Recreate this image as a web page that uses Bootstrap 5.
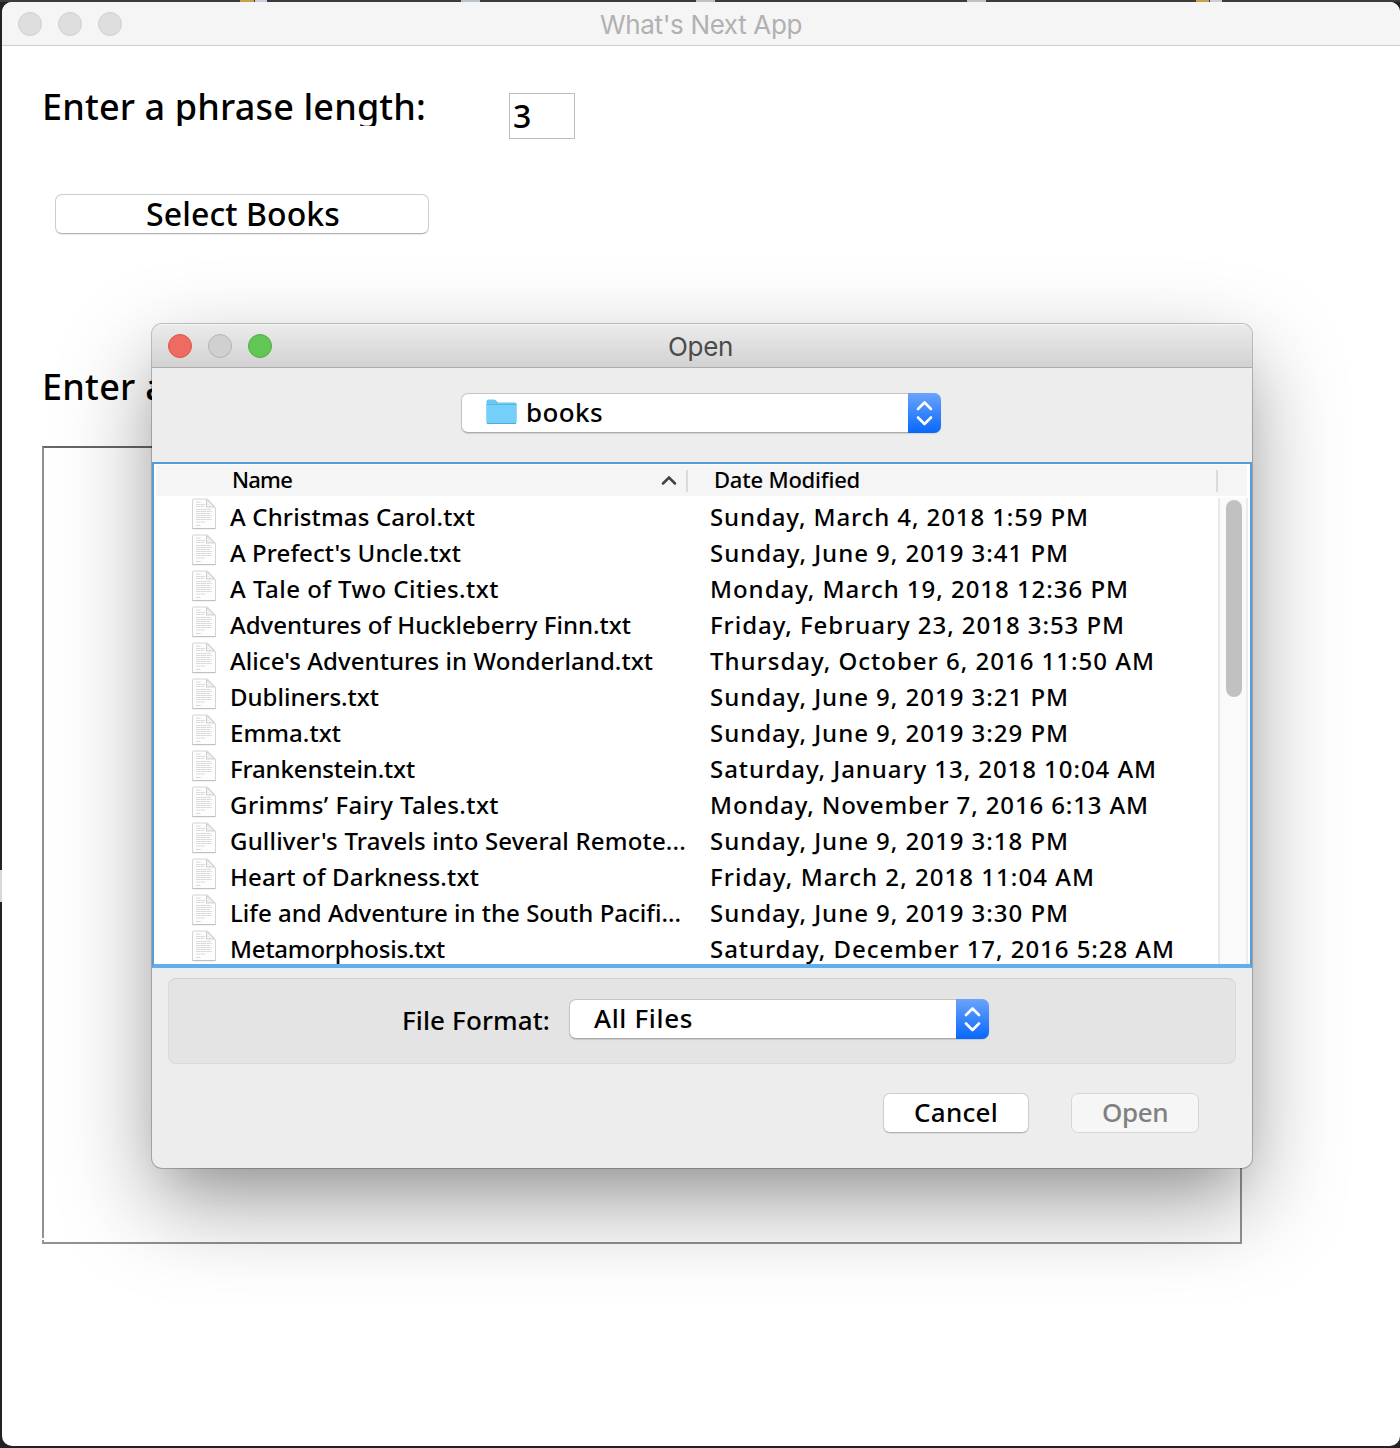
<!DOCTYPE html>
<html lang="en">
<head>
<meta charset="utf-8">
<title>What's Next App</title>
<link href="https://cdn.jsdelivr.net/npm/bootstrap@5.3.0/dist/css/bootstrap.min.css" rel="stylesheet">
<style>
body{background:#222224;font-family:"Noto Sans","Open Sans",sans-serif;color:#000;font-weight:500;width:1400px;height:1448px;overflow:hidden}
.desktop{width:1400px;height:1448px;padding:2px 0 2px 2px;background:
 linear-gradient(#c9a04a,#c9a04a) 240px 0/14px 2px no-repeat,linear-gradient(#ccd,#ccd) 255px 0/12px 2px no-repeat,
 linear-gradient(#b9c2c8,#b9c2c8) 461px 0/19px 2px no-repeat,linear-gradient(#b9c2c8,#b9c2c8) 696px 0/19px 2px no-repeat,
 linear-gradient(#b9c2c8,#b9c2c8) 967px 0/19px 2px no-repeat,linear-gradient(#c9a04a,#c9a04a) 1196px 0/13px 2px no-repeat,
 linear-gradient(#ccd,#ccd) 1210px 0/12px 2px no-repeat,linear-gradient(#d8d8d8,#d8d8d8) 0 870px/2px 32px no-repeat,
 linear-gradient(#3b3b3b,#3b3b3b) 0 0/1400px 2px no-repeat,#222224}
.appwin{background:#fff;border-radius:10px;height:1444px}
.appbar{height:44px;background:#f5f5f5;border-bottom:1px solid #d0d0d0;border-radius:10px 10px 0 0;padding-left:16px}
.lights{gap:16px}
.dot{width:24px;height:24px;border-radius:50%;border:1px solid #cfcfcf;background:#dedede;flex:none}
.wtitle{font-family:Inter,"Liberation Sans",sans-serif;font-weight:400;font-size:26px;line-height:32px;padding-top:2px}
.appbar .wtitle{color:#b1b1b1;margin-left:478px}
.appbody{padding:40px 0 0 40px}
.biglabel{font-size:36px;line-height:42px;height:40px;overflow:hidden}
.fit{display:inline-block;white-space:pre}
.field,.field:focus{width:66px;height:46px;border:1px solid #bcbcbc;border-radius:0;padding:0 0 2px 3px;font-size:32px;font-weight:500;color:#000;line-height:42px;margin:7px 0 0 83px}
.macbtn{background:#fff;border:1px solid #cdcdcd;border-bottom-color:#b2b2b2;border-radius:7px;padding:0;height:40px;line-height:34px;color:#000;font-weight:500;font-size:26px;box-shadow:0 1px 1px rgba(0,0,0,.08)}
.macbtn .fit{position:relative;top:-1px}
.macbtn:disabled{opacity:1;background:#f6f6f6;color:#808080;border-color:#d6d6d6;box-shadow:none}
.selbooks{width:374px;font-size:32px;line-height:39px;margin:55px 0 0 13px;padding-left:2px;display:block}
.label2{margin-top:132px}
.textbox{position:relative;width:1200px;height:798px;border:2px solid #929292;border-top-color:#666;margin-top:40px}
.textbox::after{content:"";position:absolute;left:-2px;bottom:2px;width:2px;height:2px;background:#fff}
.dialogwin{position:absolute;left:152px;top:324px;width:1100px;height:844px;border-radius:10px;background:#ededed;box-shadow:0 0 0 1px rgba(0,0,0,.22),0 36px 92px rgba(0,0,0,.36),0 26px 44px -20px rgba(0,0,0,.14);overflow:hidden}
.dlgbar{height:44px;background:linear-gradient(#ebebeb,#d2d2d2);border-top:1px solid #f4f4f4;border-bottom:1px solid #adadad;padding-left:16px}
.dlgbar .wtitle{color:#4b4b4b;margin-left:396px}
.red{background:#ed6b60;border-color:#dc544b}.green{background:#62c655;border-color:#50ac43}.gray{background:#d0d0d0;border-color:#b3b3b3}
.combo{height:40px;background:#fff;border:1px solid #c4c4c4;border-bottom-color:#aaa;border-radius:7px;box-shadow:0 1px 1px rgba(0,0,0,.12);font-size:26px;line-height:36px}
.stepper{width:33px;height:40px;margin:-1px -1px -1px auto;border-radius:0 7px 7px 0;background:linear-gradient(#6aa4fb,#0768fc)}
.places{width:480px;margin:25px 0 0 309px;padding-left:24px}
.folder{margin:5px 9px 0 0;flex:none}
.filelist{margin-top:29px;height:506px;border:2px solid #559cd8;border-bottom:4px solid #62adee;background:#fff;overflow:hidden}
.listhead{height:31px;margin:1px 3px 0 2px;background:#f5f5f5;font-size:22px;line-height:29px}
.listhead .fit{padding-bottom:2px}
.headname{width:530px;padding-left:76px}
.sortmark{margin-right:9px}
.sep{width:2px;height:22px;background:#dadada;flex:none}
.filerows{padding-top:2px}
.filerow{height:36px;line-height:38px;font-size:24px;padding-left:37px}
.doc{width:26px;height:32px;flex:none}
.fname{width:493px;padding-left:13px;flex:none}
.track{width:30px;height:468px;border-left:2px solid #e8e8e8;border-right:2px solid #ececec;background:#fafafa;margin:2px 2px 0 0;flex:none}
.thumb{width:16px;height:197px;border-radius:8px;background:#c1c1c1;margin:2px 0 0 6px}
.fmtpanel{margin:10px 16px 0;height:86px;border:1px solid #dadada;border-top-color:#d0d0d0;border-radius:8px;background:#e4e4e4;padding:20px 0 0 233px;font-size:26px}
.fmtlabel{line-height:42px}
.fmtcombo{width:420px;margin-left:19px;padding-left:24px}
.actions{gap:42px;padding:29px 53px 0 0}
</style>
<script src="https://cdn.jsdelivr.net/npm/bootstrap@5.3.0/dist/js/bootstrap.bundle.min.js"></script>
</head>
<body>
<svg width="0" height="0" class="d-none">
<symbol id="doc" viewBox="0 0 26 32"><path d="M1.500 2q0-1 1-1h14l8 8.500v21h-23z" fill="#fdfdfd" stroke="#d4d4d4"/><path d="M1.500 30.700h23" stroke="#bdbdbd"/><path d="M15.500 1.500v7.500h8.500z" fill="#f1f1f1" stroke="#c9c9c9" stroke-width=".9"/><path d="M5 4h5M5 6.500h9M5 8.500h8M5 11.500h15M5 13.500h16M5 15.500h14M5 17.500h16M5 19.500h15M5 21.500h16M5 24h9M5 27.500h5" stroke="#dadada" stroke-dasharray="4 .4 6 .3"/></symbol>
<symbol id="step" viewBox="0 0 33 40"><path d="M10 16l6.500-6.500L23 16M10 24.500l6.500 6.500 6.500-6.500" fill="none" stroke="#fff" stroke-width="2.600" stroke-linecap="round" stroke-linejoin="round"/></symbol>
</svg>
<div class="desktop">
<main class="appwin">
 <header class="appbar d-flex align-items-center"><div class="lights d-flex"><i class="dot"></i><i class="dot"></i><i class="dot"></i></div><span class="wtitle"><span class="fit" data-w="202">What's Next App</span></span></header>
 <section class="appbody">
  <div class="d-flex"><div class="biglabel"><span class="fit" data-w="384">Enter a phrase length:</span></div><input class="form-control field" value="3"></div>
  <button class="btn macbtn selbooks"><span class="fit" data-w="194">Select Books</span></button>
  <div class="biglabel label2"><span class="fit" data-w="124">Enter a</span></div>
  <div class="textbox"></div>
 </section>
</main>
</div>
<div class="dialogwin" role="dialog">
 <header class="dlgbar d-flex align-items-center"><div class="lights d-flex"><i class="dot red"></i><i class="dot gray"></i><i class="dot green"></i></div><span class="wtitle"><span class="fit" data-w="65">Open</span></span></header>
 <div class="combo places d-flex">
  <svg class="folder" width="31" height="26" viewBox="0 0 31 26"><path d="M.5 23V2.500Q.5.5 2.500.5H8q1.500 0 2.500 1.500l1.500 1.500h17q1.500 0 1.500 1.500v18q0 1.500-1.500 1.500H2Q.5 24.500.5 23z" fill="#69c7f4"/><path d="M.5 5.500h30V23q0 1.500-1.500 1.500H2Q.5 24.500.5 23z" fill="#74d0fa"/><path d="M.5 5.500h30" stroke="#5bb7e2"/><path d="M1 24.500h29" stroke="#55a9d0"/></svg>
  <span class="fit" data-w="77">books</span><svg class="stepper"><use href="#step"/></svg></div>
 <div class="filelist">
  <div class="listhead d-flex align-items-center"><div class="headname d-flex align-items-center"><span class="fit" data-w="60">Name</span><svg class="sortmark ms-auto" width="16" height="12" viewBox="0 0 16 12"><path d="M2 8.500l6-6 6 6" fill="none" stroke="#404040" stroke-width="2.500" stroke-linecap="round"/></svg></div><i class="sep"></i><span class="fit" data-w="146" style="margin-left:26px">Date Modified</span><i class="sep ms-auto" style="margin-right:29px"></i></div>
  <div class="d-flex"><div id="files" class="filerows flex-grow-1"></div><div class="track"><div class="thumb"></div></div></div>
 </div>
 <div class="fmtpanel d-flex"><span class="fit fmtlabel" data-w="148">File Format:</span><div class="combo fmtcombo d-flex"><span class="fit" data-w="99">All Files</span><svg class="stepper"><use href="#step"/></svg></div></div>
 <div class="actions d-flex justify-content-end"><button class="btn macbtn" style="width:146px"><span class="fit" data-w="84">Cancel</span></button><button class="btn macbtn" style="width:128px" disabled><span class="fit" data-w="66">Open</span></button></div>
</div>
<script>
// file name, name width, date, date width
const files=[
["A Christmas Carol.txt",245,"Sunday, March 4, 2018 1:59 PM",379],
["A Prefect's Uncle.txt",231,"Sunday, June 9, 2019 3:41 PM",359],
["A Tale of Two Cities.txt",269,"Monday, March 19, 2018 12:36 PM",419],
["Adventures of Huckleberry Finn.txt",401,"Friday, February 23, 2018 3:53 PM",415],
["Alice's Adventures in Wonderland.txt",423,"Thursday, October 6, 2016 11:50 AM",445],
["Dubliners.txt",149,"Sunday, June 9, 2019 3:21 PM",359],
["Emma.txt",111,"Sunday, June 9, 2019 3:29 PM",359],
["Frankenstein.txt",185,"Saturday, January 13, 2018 10:04 AM",447],
["Grimms’ Fairy Tales.txt",269,"Monday, November 7, 2016 6:13 AM",439],
["Gulliver's Travels into Several Remote...",456,"Sunday, June 9, 2019 3:18 PM",359],
["Heart of Darkness.txt",249,"Friday, March 2, 2018 11:04 AM",385],
["Life and Adventure in the South Pacifi...",451,"Sunday, June 9, 2019 3:30 PM",359],
["Metamorphosis.txt",215,"Saturday, December 17, 2016 5:28 AM",465]];
document.getElementById("files").innerHTML=files.map(([n,w,d,v])=>`<div class="filerow d-flex"><svg class="doc"><use href="#doc"/></svg><div class="fname"><span class="fit" data-w="${w}">${n}</span></div><span class="fit" data-w="${v}">${d}</span></div>`).join("");
document.querySelectorAll("[data-w]").forEach(e=>{
 const natural=e.getBoundingClientRect().width;
 e.style.letterSpacing=((+e.dataset.w-natural)/e.textContent.length)+"px";
});
</script>
</body>
</html>
